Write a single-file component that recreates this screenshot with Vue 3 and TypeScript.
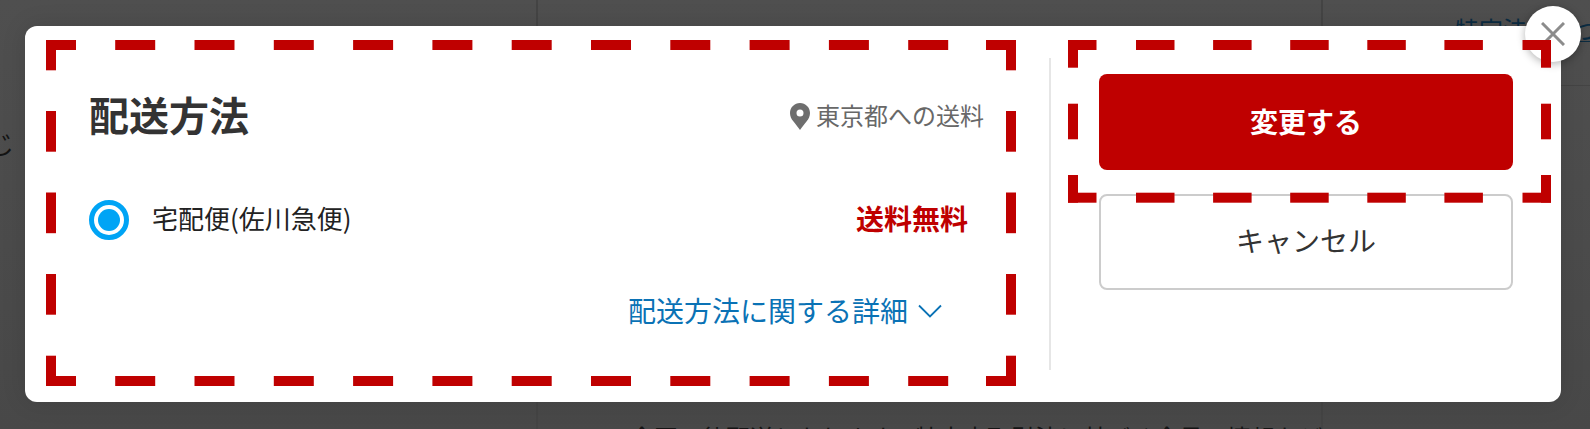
<script setup lang="ts">
interface Dash { x: number; y: number; w: number; h: number }

const T = 10

function boxDashes(
  l: number, t: number, r: number, b: number,
  hStart: number[], hLen: number, vStart: number[], vLen: number,
  cornerH: number, cornerV: number
): Dash[] {
  const out: Dash[] = []
  out.push({ x: l, y: t, w: cornerH, h: T }, { x: l, y: t, w: T, h: cornerV })
  out.push({ x: r - cornerH, y: t, w: cornerH, h: T }, { x: r - T, y: t, w: T, h: cornerV })
  out.push({ x: l, y: b - T, w: cornerH, h: T }, { x: l, y: b - cornerV, w: T, h: cornerV })
  out.push({ x: r - cornerH, y: b - T, w: cornerH, h: T }, { x: r - T, y: b - cornerV, w: T, h: cornerV })
  for (const x of hStart) {
    out.push({ x, y: t, w: hLen, h: T }, { x, y: b - T, w: hLen, h: T })
  }
  for (const y of vStart) {
    out.push({ x: l, y, w: T, h: vLen }, { x: r - T, y, w: T, h: vLen })
  }
  return out
}

const mainH = Array.from({ length: 11 }, (_, i) => 115.2 + i * 79.3)
const sideH = Array.from({ length: 5 }, (_, i) => 1136 + i * 77.1)

const dashes: Dash[] = [
  ...boxDashes(46, 40, 1016, 386, mainH, 40, [111, 192.5, 274], 40.7, 30, 30.3),
  ...boxDashes(1068, 40, 1551, 202.7, sideH, 38.5, [103.7], 35.6, 28.5, 27.7),
]
</script>

<template>
  <div class="page">
    <div class="behind">
      <i class="rule rule-a"></i>
      <i class="rule rule-b"></i>
      <i class="rule-h"></i>
      <span class="scrap scrap-left">じ</span>
      <span class="scrap scrap-link">特定法に基づく</span>
      <span class="scrap scrap-bottom">全国一律配送となります。特定商取引法に基づく会員の情報など</span>
    </div>

    <div class="modal">
      <section class="main">
        <header class="head">
          <h2 class="title">配送方法</h2>
          <div class="area">
            <svg class="pin" viewBox="0 0 20 27" width="20" height="27" aria-hidden="true">
              <path
                fill="#6e6e6e"
                fill-rule="evenodd"
                d="M10 0C4.5 0 0 4.4 0 9.9c0 3.2 1.3 5.7 3.3 8.4 2 2.7 4.6 5.6 6.7 8.7 2.1-3.1 4.7-6 6.7-8.7 2-2.7 3.3-5.2 3.3-8.4C20 4.4 15.500 0 10 0Zm0 6.400a3.500 3.500 0 1 1 0 7 3.500 3.500 0 0 1 0-7Z"
              />
            </svg>
            <span class="area-text">東京都への送料</span>
          </div>
        </header>

        <div class="option">
          <span class="radio"><span class="radio-dot"></span></span>
          <span class="option-name">宅配便(佐川急便)</span>
          <strong class="price">送料無料</strong>
        </div>

        <div class="details">
          <a class="details-link">配送方法に関する詳細</a>
          <svg class="chevron" viewBox="0 0 24 14" width="24" height="14" aria-hidden="true">
            <path d="M1 1.500 12 12.500 23 1.500" fill="none" stroke="#0a72b5" stroke-width="1.800" />
          </svg>
        </div>
      </section>

      <div class="divider"></div>

      <aside class="side">
        <button class="btn btn-primary" type="button">変更する</button>
        <button class="btn btn-cancel" type="button">キャンセル</button>
      </aside>

      <button class="close" type="button" aria-label="閉じる">
        <svg viewBox="0 0 24 24" width="24" height="24" aria-hidden="true">
          <path d="M1 1 23 23M23 1 1 23" fill="none" stroke="#8c8c8c" stroke-width="3" />
        </svg>
      </button>
    </div>

    <svg class="marks" width="1590" height="429" viewBox="0 0 1590 429" aria-hidden="true">
      <rect
        v-for="(d, i) in dashes"
        :key="i"
        :x="d.x"
        :y="d.y"
        :width="d.w"
        :height="d.h"
        fill="#bf0000"
      />
    </svg>
  </div>
</template>

<style>
html,
body {
  margin: 0;
  background: #4b4b4b;
}
</style>

<style scoped>
.page {
  position: relative;
  box-sizing: border-box;
  width: 1590px;
  height: 429px;
  padding: 26px 0 0 25px;
  overflow: hidden;
  background: linear-gradient(#4f4f4f, #484848);
  font-family: "Noto Sans CJK JP", "Liberation Sans", sans-serif;
}

.behind {
  position: absolute;
  inset: 0;
}

.rule {
  position: absolute;
  top: 0;
  bottom: 0;
  width: 2px;
  background: #444;
}

.rule-a {
  left: 536px;
}

.rule-b {
  left: 1321px;
}

.rule-h {
  position: absolute;
  left: 1321px;
  right: 0;
  top: 85px;
  height: 1px;
  background: #444;
}

.scrap {
  position: absolute;
  white-space: nowrap;
  line-height: 1;
}

.scrap-left {
  left: -12px;
  top: 130px;
  font-size: 26px;
  color: #141414;
}

.scrap-link {
  left: 1455px;
  top: 17px;
  font-size: 24px;
  color: #0b2c42;
  border-bottom: 1px solid #0b2c42;
}

.scrap-bottom {
  left: 630px;
  top: 425px;
  font-size: 24px;
  color: #141414;
}

.modal {
  position: relative;
  display: flex;
  width: 1536px;
  height: 376px;
  border-radius: 12px;
  background: #fff;
  box-shadow: 0 0 24px rgba(0, 0, 0, 0.12);
}

.main {
  box-sizing: border-box;
  width: 1024px;
  padding: 65px 65px 0 64px;
}

.head {
  display: flex;
  align-items: center;
  justify-content: space-between;
  height: 50px;
}

.title {
  margin: 0 0 4px;
  font-size: 40px;
  font-weight: 700;
  line-height: 50px;
  color: #333;
}

.area {
  display: flex;
  align-items: center;
  gap: 6px;
  font-size: 24px;
  line-height: 30px;
  color: #686868;
}

.area-text {
  margin-bottom: 2px;
}

.pin {
  display: block;
}

.option {
  display: flex;
  align-items: center;
  height: 40px;
  margin-top: 59px;
  padding-right: 16px;
}

.radio {
  display: flex;
  align-items: center;
  justify-content: center;
  box-sizing: border-box;
  width: 40px;
  height: 40px;
  border: 5px solid #00a4f5;
  border-radius: 50%;
}

.radio-dot {
  width: 22px;
  height: 22px;
  border-radius: 50%;
  background: #00a4f5;
}

.option-name {
  margin: 0 0 5px 23px;
  font-size: 26px;
  line-height: 40px;
  color: #222;
}

.price {
  margin: 0 0 5px auto;
  font-size: 28px;
  font-weight: 700;
  line-height: 40px;
  color: #bf0000;
}

.details {
  display: flex;
  align-items: center;
  justify-content: flex-end;
  gap: 10px;
  height: 40px;
  margin-top: 50px;
  padding-right: 42px;
}

.details-link {
  font-size: 28px;
  line-height: 40px;
  color: #0a72b5;
}

.chevron {
  display: block;
  margin-top: 1px;
}

.divider {
  width: 2px;
  margin: 32px 0;
  background: #e6e6e6;
}

.side {
  display: flex;
  flex-direction: column;
  gap: 24px;
  box-sizing: border-box;
  width: 510px;
  padding: 48px 0 0 48px;
}

.btn {
  display: block;
  box-sizing: border-box;
  width: 414px;
  height: 96px;
  padding: 0;
  border-radius: 8px;
  font-family: inherit;
  font-size: 28px;
}

.btn-primary {
  padding-bottom: 2px;
  border: 0;
  background: #bf0000;
  color: #fff;
  font-weight: 700;
}

.btn-cancel {
  padding-bottom: 4px;
  border: 2px solid #ccc;
  background: #fff;
  color: #333;
}

.close {
  position: absolute;
  top: -20px;
  right: -20px;
  display: flex;
  align-items: center;
  justify-content: center;
  width: 56px;
  height: 56px;
  padding: 0;
  border: 0;
  border-radius: 50%;
  background: #fff;
  box-shadow: 0 2px 8px rgba(0, 0, 0, 0.3);
}

.marks {
  position: absolute;
  top: 0;
  left: 0;
  pointer-events: none;
}
</style>
